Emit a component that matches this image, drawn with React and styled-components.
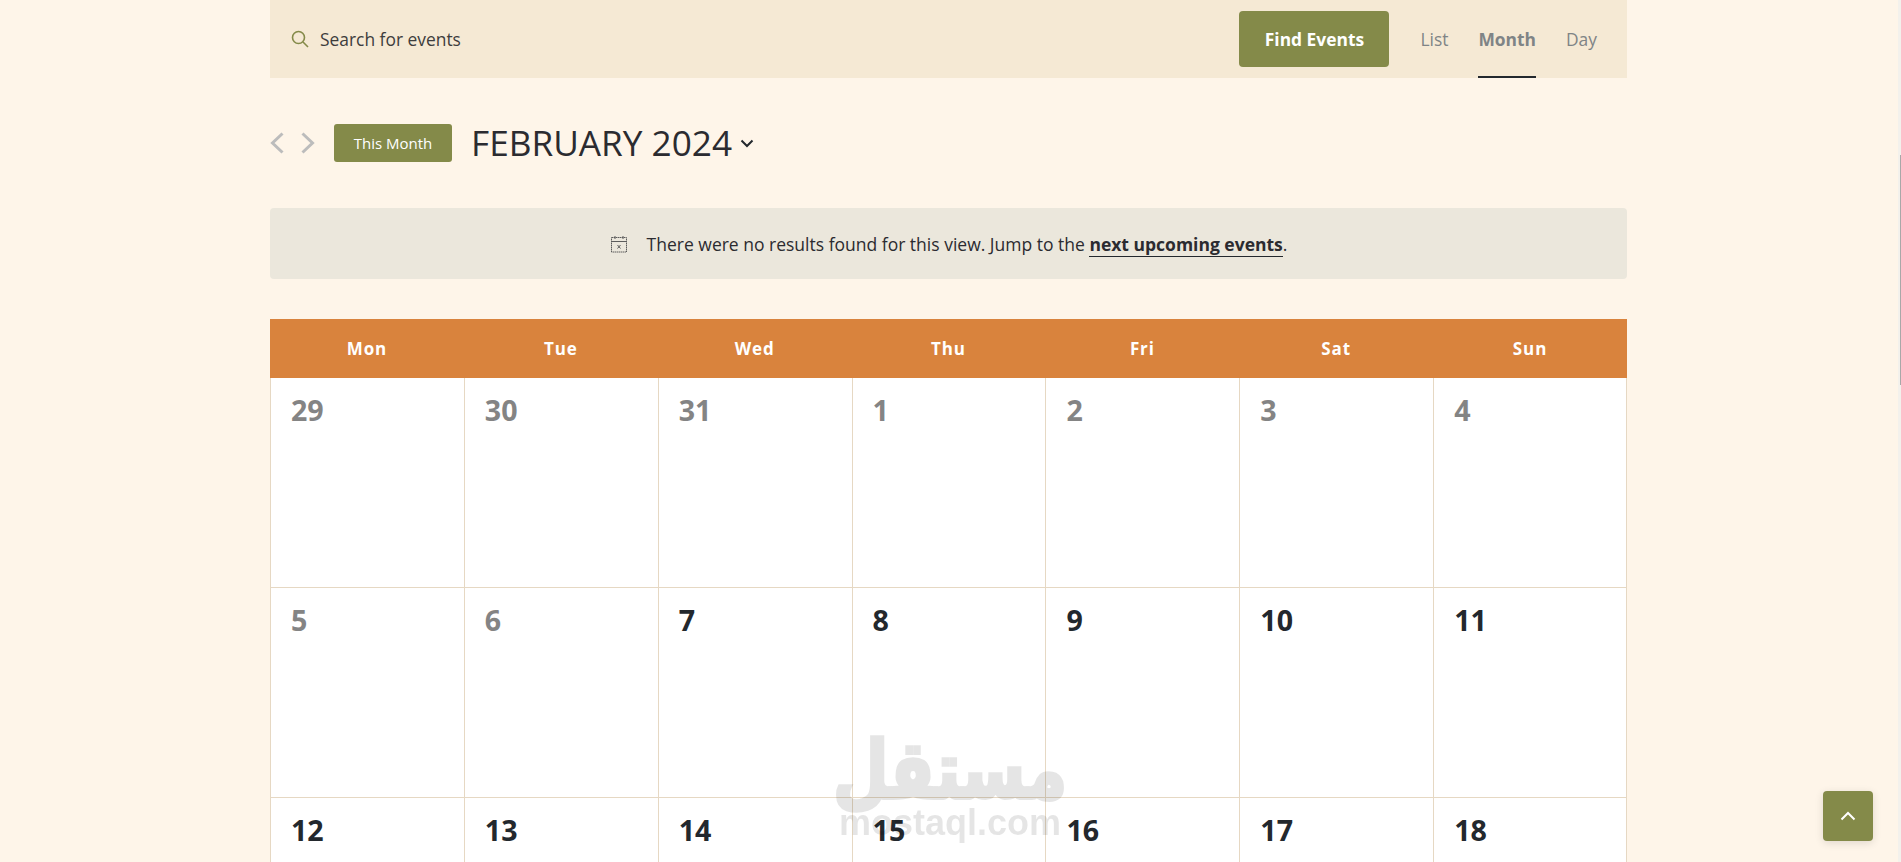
import React from 'react'
import styled, { createGlobalStyle } from 'styled-components'

const GlobalStyle = createGlobalStyle`
  html, body {
    margin: 0;
    height: 100%;
    overflow: hidden;
    background: #fef5e9;
    font-family: "Open Sans", "Liberation Sans", sans-serif;
    color: #23282d;
  }
`

const Page = styled.div`
  display: flex;
  height: 100vh;
  overflow: hidden;
`

const Main = styled.main`
  flex: 1;
  min-width: 0;
`

const Container = styled.div`
  width: 1357px;
  margin-left: 270px;
`

const ScrollTrack = styled.div`
  position: relative;
  width: 3px;
  background: #f3f1ec;
`

const ScrollThumb = styled.div`
  position: absolute;
  top: 155px;
  right: 0;
  width: 1px;
  height: 230px;
  background: #a8a8a8;
`

const SearchBar = styled.div`
  display: flex;
  align-items: center;
  height: 78px;
  padding: 0 30px 0 21px;
  background: #f5e9d4;
`

const SearchField = styled.div`
  display: flex;
  flex: 1;
  align-items: center;
  gap: 11px;
  font-size: 17.4px;
  color: #3d3d3d;
`

const FindButton = styled.button`
  width: 150px;
  height: 56px;
  margin-right: 31px;
  border: 0;
  border-radius: 4px;
  background: #848a49;
  color: #fff;
  font: 700 17.4px "Open Sans", sans-serif;
`

const Views = styled.nav`
  display: flex;
  align-self: stretch;
  gap: 30px;
`

const ViewLink = styled.a`
  display: flex;
  align-items: center;
  height: 100%;
  box-sizing: border-box;
  font-size: 17.4px;
  font-weight: ${p => (p.$active ? 700 : 400)};
  color: #7f8486;
  border-bottom: 2px solid ${p => (p.$active ? '#23282d' : 'transparent')};
  padding-top: 2px;
`

const TopBar = styled.div`
  display: flex;
  align-items: center;
  height: 130px;
`

const Arrows = styled.div`
  display: flex;
  align-items: center;
  gap: 17px;
  margin-right: 19px;
`

const ThisMonth = styled.button`
  width: 118px;
  height: 38px;
  margin-right: 19px;
  border: 0;
  border-radius: 3px;
  background: #848a49;
  color: #fff;
  font: 400 15px "Open Sans", sans-serif;
`

const Heading = styled.h1`
  margin: 0 8px 0 0;
  font-size: 35.2px;
  font-weight: 400;
  line-height: 1;
  color: #2b2b30;
`

const Notice = styled.div`
  display: flex;
  align-items: center;
  justify-content: center;
  gap: 19px;
  height: 71px;
  border-radius: 4px;
  background: #ebe7dc;
  font-size: 17.5px;
  color: #2b2b30;
`

const NoticeLink = styled.a`
  font-weight: 700;
  border-bottom: 1px solid #23282d;
`

const Calendar = styled.div`
  margin-top: 40px;
`

const Week = styled.div`
  display: grid;
  grid-template-columns: repeat(7, 1fr);
`

const DayName = styled.div`
  display: flex;
  align-items: center;
  justify-content: center;
  height: 59px;
  background: #d9833d;
  color: #fff;
  font-size: 17px;
  font-weight: 700;
  letter-spacing: 0.9px;
`

const Cell = styled.div`
  box-sizing: border-box;
  height: 210px;
  padding: 13px 20px;
  background: #fff;
  border-left: 1px solid #e6d8c3;
  border-bottom: 1px solid #e6d8c3;
  font-size: 28.6px;
  font-weight: 700;
  line-height: 38px;
  color: ${p => (p.$past ? '#848484' : '#23282d')};

  &:last-child {
    border-right: 1px solid #e6d8c3;
  }
`

const Watermark = styled.div`
  position: fixed;
  top: 732px;
  left: 832px;
  width: 236px;
  text-align: center;
  color: #000;
  opacity: 0.1;
  pointer-events: none;
`

const WatermarkArabic = styled.div`
  font: 700 64px/76px "DejaVu Sans", sans-serif;
  -webkit-text-stroke: 3px #000;
  transform: scaleY(1.25);
`

const WatermarkLatin = styled.div`
  font: 700 36px/30px "Liberation Sans", sans-serif;
`

const BackToTop = styled.button`
  position: fixed;
  right: 28px;
  bottom: 21px;
  display: flex;
  align-items: center;
  justify-content: center;
  width: 50px;
  height: 50px;
  padding: 0;
  border: 0;
  border-radius: 4px;
  background: #848a49;
  box-shadow: 0 2px 8px rgba(0, 0, 0, 0.12);
`

const SearchIcon = () => (
  <svg width="18" height="18" viewBox="0 0 18 18" fill="none" stroke="#848a49" strokeWidth="1.6">
    <circle cx="7.5" cy="7.5" r="6" />
    <path d="M12 12l5 5" />
  </svg>
)

const Chevron = ({ dir }) => (
  <svg width="14" height="22" viewBox="0 0 14 22" fill="none" stroke="#bcbcbc" strokeWidth="3">
    <path d={dir === 'left' ? 'M12.5 1.5L2.5 11l10 9.5' : 'M1.5 1.5l10 9.5-10 9.5'} />
  </svg>
)

const Caret = () => (
  <svg width="14" height="9" viewBox="0 0 14 9" fill="none" stroke="#23282d" strokeWidth="2">
    <path d="M1.5 1.5L7 7l5.5-5.5" />
  </svg>
)

const CalendarIcon = () => (
  <svg width="18" height="18" viewBox="0 0 18 18" fill="none" stroke="#5c5c5c" strokeWidth="1">
    <rect x="1.5" y="2.5" width="15" height="14.5" strokeDasharray="1.5 0.5" />
    <path d="M1.5 6.5h15M5 1v3M13 1v3" />
    <path d="M7.5 10l3 3.5M10.5 10l-3 3.5" />
  </svg>
)

const UpIcon = () => (
  <svg width="16" height="10" viewBox="0 0 16 10" fill="none" stroke="#fff" strokeWidth="2">
    <path d="M1.5 8.5L8 2l6.5 6.5" />
  </svg>
)

const weekDays = ['Mon', 'Tue', 'Wed', 'Thu', 'Fri', 'Sat', 'Sun']

const weeks = [
  [29, 30, 31, 1, 2, 3, 4],
  [5, 6, 7, 8, 9, 10, 11],
  [12, 13, 14, 15, 16, 17, 18],
]

// everything before 7 Feb is greyed out
const isPast = (w, d) => w === 0 || (w === 1 && d < 2)

const App = () => (
  <Page>
    <GlobalStyle />
    <Main>
      <Container>
        <SearchBar>
          <SearchField>
            <SearchIcon />
            Search for events
          </SearchField>
          <FindButton>Find Events</FindButton>
          <Views>
            <ViewLink>List</ViewLink>
            <ViewLink $active>Month</ViewLink>
            <ViewLink>Day</ViewLink>
          </Views>
        </SearchBar>

        <TopBar>
          <Arrows>
            <Chevron dir="left" />
            <Chevron dir="right" />
          </Arrows>
          <ThisMonth>This Month</ThisMonth>
          <Heading>FEBRUARY 2024</Heading>
          <Caret />
        </TopBar>

        <Notice>
          <CalendarIcon />
          <span>
            There were no results found for this view. Jump to the{' '}
            <NoticeLink>next upcoming events</NoticeLink>.
          </span>
        </Notice>

        <Calendar>
          <Week>
            {weekDays.map(day => (
              <DayName key={day}>{day}</DayName>
            ))}
          </Week>
          {weeks.map((week, w) => (
            <Week key={w}>
              {week.map((num, d) => (
                <Cell key={d} $past={isPast(w, d)}>
                  {num}
                </Cell>
              ))}
            </Week>
          ))}
        </Calendar>
      </Container>
    </Main>
    <ScrollTrack>
      <ScrollThumb />
    </ScrollTrack>
    <Watermark>
      <WatermarkArabic>مستقل</WatermarkArabic>
      <WatermarkLatin>mostaql.com</WatermarkLatin>
    </Watermark>
    <BackToTop>
      <UpIcon />
    </BackToTop>
  </Page>
)

export default App
